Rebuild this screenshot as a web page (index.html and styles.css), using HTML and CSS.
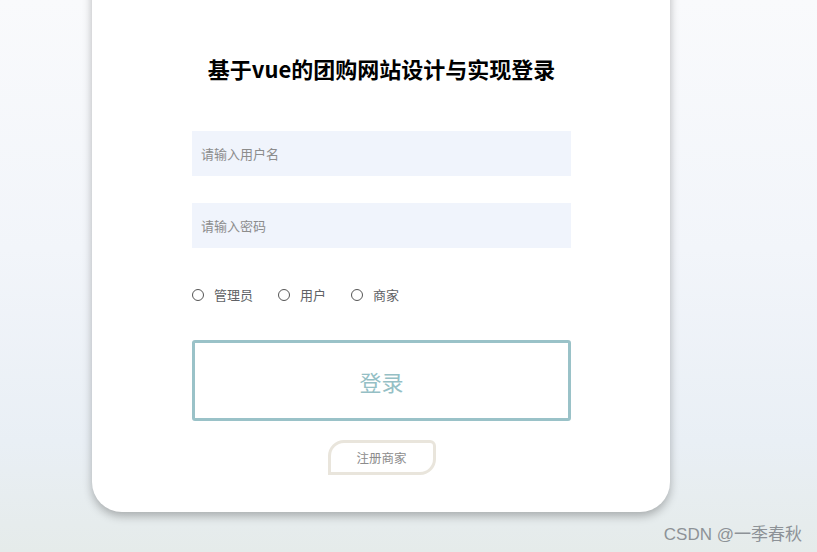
FILE: index.html
```html
<!DOCTYPE html>
<html lang="zh-CN">
<head>
  <meta charset="UTF-8">
  <meta name="viewport" content="width=device-width, initial-scale=1.0">
  <title>登录</title>
  <link rel="stylesheet" href="styles.css">
</head>
<body>
  <div class="page">
    <div class="login-card">
      <h1 class="login-title">基于vue的团购网站设计与实现登录</h1>
      <form class="login-form">
        <input type="text" class="login-input" placeholder="请输入用户名">
        <input type="password" class="login-input second" placeholder="请输入密码">
        <div class="role-group">
          <label class="role"><span class="role-dot"></span>管理员</label>
          <label class="role"><span class="role-dot"></span>用户</label>
          <label class="role"><span class="role-dot"></span>商家</label>
        </div>
        <button type="submit" class="login-btn">登录</button>
        <button type="button" class="register-btn">注册商家</button>
      </form>
    </div>
  </div>
  <div class="watermark">CSDN @一季春秋</div>
</body>
</html>
```

FILE: styles.css
```css
/* General Styles */
body {
  margin: 0;
  height: 100vh;
  overflow: hidden;
  font-family: "Noto Sans CJK SC", "Noto Sans", sans-serif;
  background: linear-gradient(180deg, #f9fafc 0%, #f2f5fa 45%, #e9eff5 80%, #e5ebea 100%);
  position: relative;
}

.page {
  padding-left: 92px;
}

.login-card {
  width: 379px;
  margin-top: -40px;
  padding: 93px 99px 37px 100px;
  background: #fff;
  border-radius: 30px;
  box-shadow: 0 4px 10px rgba(0, 0, 0, 0.28);
}

.login-title {
  margin: 0;
  height: 32px;
  line-height: 30px;
  font-size: 22px;
  font-weight: bold;
  color: #000;
  text-align: center;
}

.login-form {
  display: flex;
  flex-direction: column;
  margin-top: 46px;
}

.login-input {
  height: 45px;
  padding: 0 9px;
  border: none;
  outline: none;
  background: #f0f4fc;
  font-family: inherit;
  font-size: 13px;
  color: #333;
  box-sizing: border-box;
}

.login-input::placeholder {
  color: #8c8c8c;
}

.login-input.second {
  margin-top: 27px;
}

.role-group {
  display: flex;
  gap: 25px;
  height: 20px;
  margin-top: 36px;
  align-items: center;
}

.role {
  display: flex;
  align-items: center;
  font-size: 13px;
  color: #606266;
}

.role-dot {
  width: 10px;
  height: 10px;
  margin-top: 1px;
  border: 1px solid #555;
  border-radius: 50%;
  margin-right: 10px;
}

.login-btn {
  height: 81px;
  margin-top: 36px;
  background: #fff;
  border: 3px solid #9ac2c8;
  border-radius: 3px;
  font-family: inherit;
  font-size: 22px;
  color: #95bfc5;
  cursor: pointer;
}

.register-btn {
  align-self: center;
  width: 108px;
  height: 35px;
  margin-top: 19px;
  background: #fff;
  border: 3px solid #e9e5dc;
  border-radius: 16px 6px 16px 0;
  font-family: inherit;
  font-size: 12.5px;
  color: #8c8c8c;
  cursor: pointer;
}

.watermark {
  position: absolute;
  right: 15px;
  bottom: 7px;
  font-family: "Liberation Sans", "Noto Sans CJK SC", sans-serif;
  font-size: 17px;
  color: #8d9297;
}
```
